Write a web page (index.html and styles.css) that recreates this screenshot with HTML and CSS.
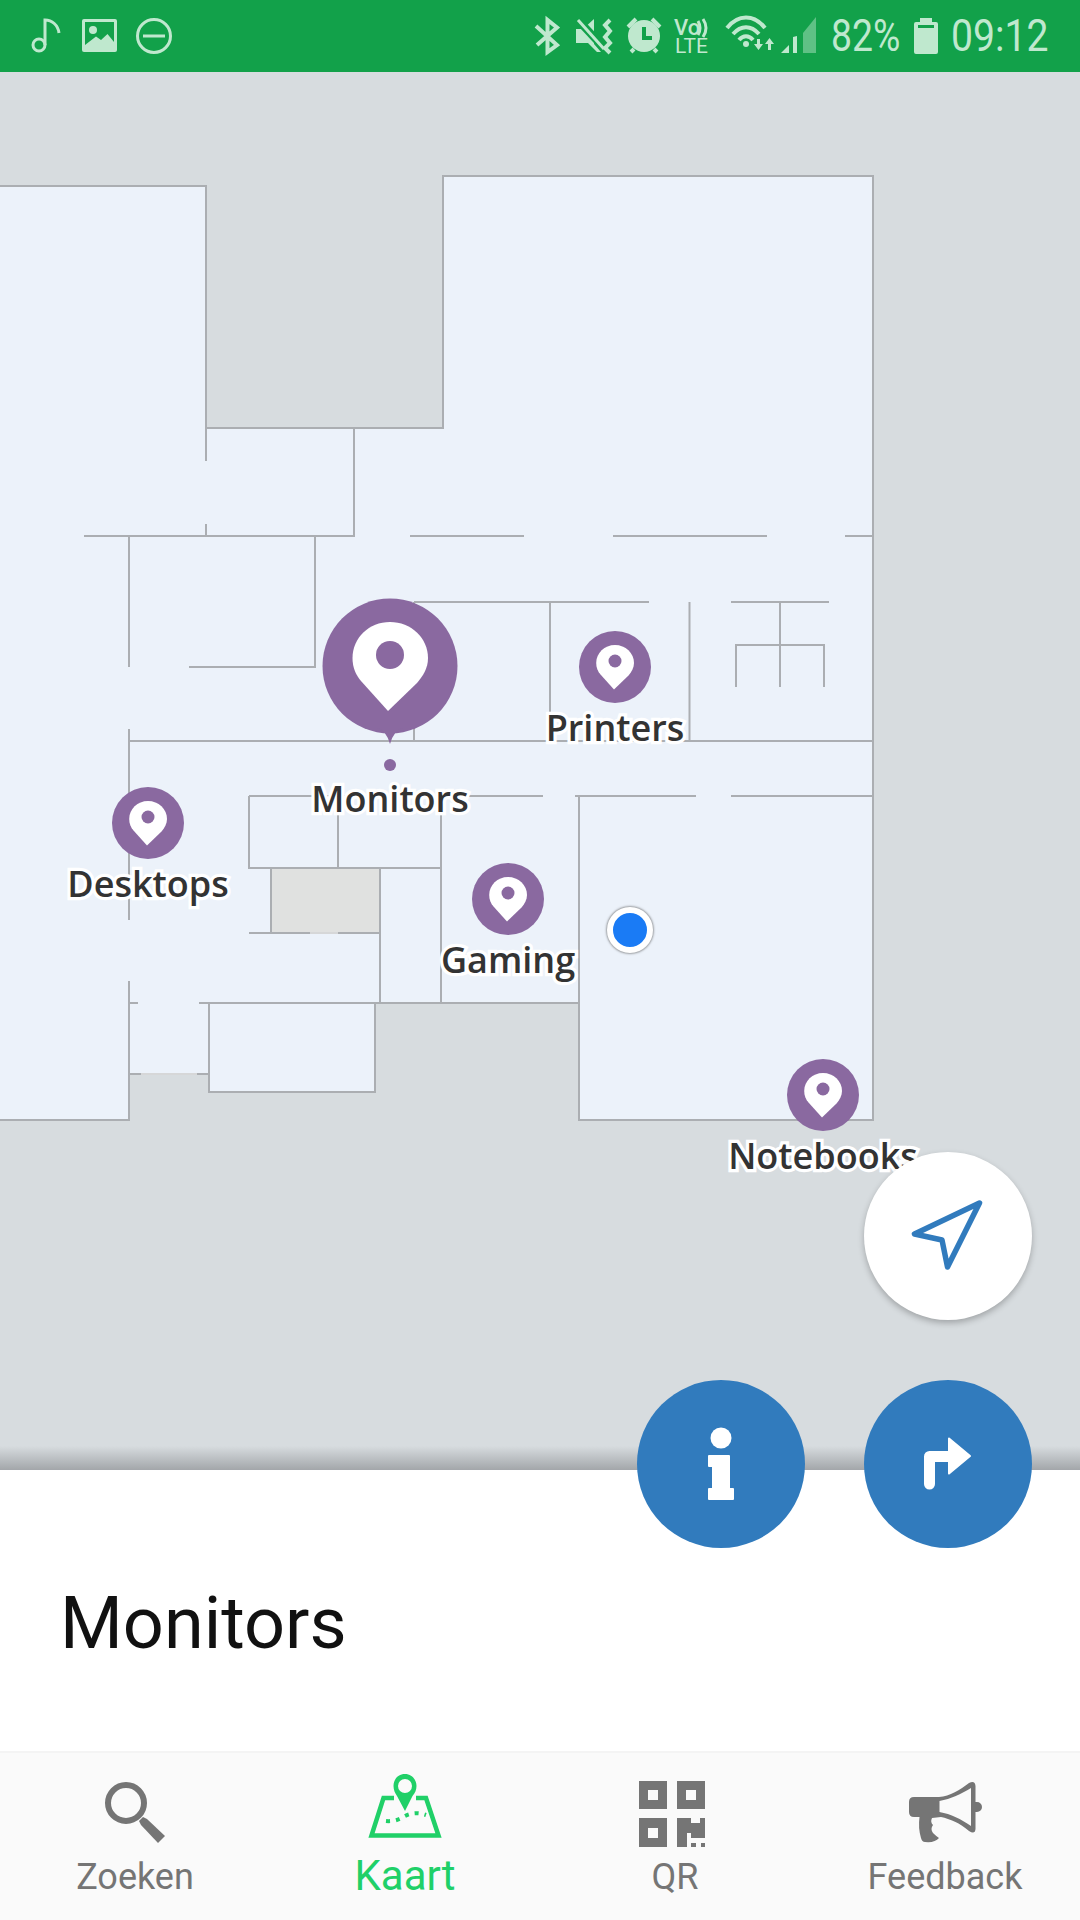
FILE: index.html
```html
<!DOCTYPE html>
<html lang="nl">
<head>
<meta charset="utf-8">
<title>Kaart</title>
<link rel="stylesheet" href="styles.css">
</head>
<body>
<div class="app">
  <header class="status">
    <svg class="status-left" viewBox="20 10 160 52">
      <circle class="st-line" cx="39" cy="45" r="6"/>
      <path class="st-line" d="M45 45V20C52 20 58 25 59 33"/>
      <rect class="st-fill" x="82" y="19" width="35" height="33" rx="2"/>
      <path class="st-hole" d="M85 22H114V42L107.500 34L101 40L96 36.500L85 45Z"/>
      <circle class="st-fill" cx="93" cy="30" r="4"/>
      <circle class="st-line" cx="154" cy="36" r="16.500"/>
      <rect class="st-fill" x="143" y="34.500" width="22" height="3"/>
    </svg>
    <svg class="status-icons" viewBox="530 10 300 52">
      <path class="st-line st-thick" d="M536 26L557 45L547.500 52V20L557 27.500L537 45"/>
      <path class="st-fill" d="M576 29H583L594 19V44L601 52H597L588 43H576Z"/>
      <path class="st-cut" d="M578 20L605 49"/>
      <path class="st-line st-mute" d="M578 20L604 49"/>
      <path class="st-line st-thick" d="M610 20L605 25L610 31L605 37L610 43L605 48L610 53"/>
      <circle class="st-fill" cx="644" cy="36" r="16"/>
      <path class="st-hand" d="M644 27V38H652"/>
      <path class="st-line st-thick" d="M628 27L636 19M660 27L652 19M631 52L634 49M657 52L654 49"/>
      <text class="st-volte" x="674" y="35">Vo<tspan class="st-lte" x="675" y="53">LTE</tspan></text>
      <path class="st-line st-thin" d="M698 21Q702 28 698 35M703 19Q709 28 703 37"/>
      <path class="st-line st-thick" d="M727 28C738 14 754 14 765 28M733 34C741 25 751 25 759 34M739 40C743 35 749 35 753 40"/>
      <circle class="st-fill" cx="746" cy="44" r="3"/>
      <path class="st-fill" d="M754 44H757V39H760V44H763L758.500 50ZM768 44H765L769.500 38L774 44H771V50H768Z"/>
      <path class="st-fill" d="M781 53L789 45V53ZM793 53V37L797 36V53Z"/>
      <path class="st-fill st-dim" d="M803 53V33L816 17V53Z"/>
    </svg>
    <span class="st-text st-pct">82%</span>
    <svg class="status-batt" viewBox="914 18 24 36">
      <path class="st-fill" d="M920 18H932V22H936Q938 22 938 24V52Q938 54 936 54H916Q914 54 914 52V24Q914 22 916 22H920Z"/>
      <rect class="st-hole" x="918" y="25" width="16" height="3"/>
    </svg>
    <span class="st-text st-time">09:12</span>
  </header>

  <main class="map">
    <svg class="plan" viewBox="0 72 1080 1398">
      <path class="floor" d="M0 186H206V428H443V176H873V1120H579V1003H375V1092H209V1074H129V1120H0Z"/>
      <rect class="closet" x="271" y="868" width="109" height="65"/>
      <path class="walls" d="M0 186H206V461M206 524V536M206 428H443V176H873V1120H579V796M354 428V536H84M410 536H524M613 536H767M845 536H873"/>
      <path class="walls" d="M129 536V667M315 536V667H189M414 602H649M550 602V741M689.500 602V741M731 602H829M780 602V687M736 687V645H824V687"/>
      <path class="walls" d="M129 729V920M129 741H873M414 602V741M249 796H543M575 796H696M731 796H873M249 796V868H441M338 796V868M441 796V1003"/>
      <path class="walls" d="M271 868V933M249 933H310M338 933H380M380 868V1003M129 981V1120H0M129 1003H138M199 1003H579M209 1003V1092H375V1003M129 1074H141M197 1074H209"/>
      <path class="door" d="M141 1074H197M310 933H338"/>
    </svg>

    <div class="pin pin-printers">
      <svg class="pin-icon" viewBox="-36 -36 72 72"><use href="#marker-small"/></svg>
      <span class="pin-label">Printers</span>
    </div>
    <div class="pin pin-desktops">
      <svg class="pin-icon" viewBox="-36 -36 72 72"><use href="#marker-small"/></svg>
      <span class="pin-label">Desktops</span>
    </div>
    <div class="pin pin-gaming">
      <svg class="pin-icon" viewBox="-36 -36 72 72"><use href="#marker-small"/></svg>
      <span class="pin-label">Gaming</span>
    </div>
    <div class="pin pin-notebooks">
      <svg class="pin-icon" viewBox="-36 -36 72 72"><use href="#marker-small"/></svg>
      <span class="pin-label">Notebooks</span>
    </div>
    <div class="pin pin-monitors">
      <svg class="pin-big" viewBox="-68 -68 136 173">
        <circle class="mk-bg" r="67.500"/>
        <path class="mk-bg" d="M-13 62Q-4 64 0 78Q4 64 13 62Z"/>
        <path class="mk-white" d="M0 -44C-21 -44 -37.500 -28 -37.500 -8C-37.500 2 -34 9 -29 15L-2 45L27 17C33 10 38 2 38 -8C38 -28 21 -44 0 -44Z"/>
        <circle class="mk-bg" cy="-11" r="14"/>
        <circle class="mk-bg" cy="99" r="6"/>
      </svg>
      <span class="pin-label pin-label-big">Monitors</span>
    </div>
    <div class="me"></div>
  </main>

  <section class="sheet">
    <h1 class="sheet-title">Monitors</h1>
  </section>

  <nav class="tabs">
    <div class="tab">
      <svg class="tab-icon" viewBox="85 1772 100 76">
        <circle class="ic-stroke" cx="126" cy="1803" r="18"/>
        <path class="ic-fill" d="M139 1821L143 1817L147 1819L165 1836L158 1843L141 1825Z"/>
      </svg>
      <span class="tab-label">Zoeken</span>
    </div>
    <div class="tab tab-active">
      <svg class="tab-icon" viewBox="355 1772 100 76">
        <path class="ic-green-line" d="M394 1798H383.500L371.500 1835.500H438.500L426 1798H416"/>
        <path class="ic-green-dots" d="M386 1821Q396 1822 405 1816Q415 1811 426 1815"/>
        <path class="ic-green-fill" fill-rule="evenodd" d="M405 1774C397.500 1774 393.500 1780 393.500 1786C393.500 1790 395 1793 397 1796L405 1811L412.500 1796C415 1793 416.500 1790 416.500 1786C416.500 1780 412 1774 405 1774ZM405 1779A7 7 0 1 1 405 1793A7 7 0 1 1 405 1779Z"/>
      </svg>
      <span class="tab-label">Kaart</span>
    </div>
    <div class="tab">
      <svg class="tab-icon" viewBox="625 1772 100 76">
        <path class="ic-fill" fill-rule="evenodd" d="M639 1781H667V1809H639ZM648 1790V1800H658V1790Z"/>
        <path class="ic-fill" fill-rule="evenodd" d="M677 1781H705V1809H677ZM686 1790V1800H696V1790Z"/>
        <path class="ic-fill" fill-rule="evenodd" d="M639 1818H667V1847H639ZM648 1828V1838H658V1828Z"/>
        <path class="ic-fill" d="M677 1818H691V1823H700V1818H705V1838H691V1833H687V1847H677ZM691 1843H696V1847H691ZM701 1843H705V1847H701Z"/>
      </svg>
      <span class="tab-label">QR</span>
    </div>
    <div class="tab">
      <svg class="tab-icon" viewBox="895 1772 100 76">
        <path class="ic-fill" fill-rule="evenodd" d="M914 1797H939C950 1796 960 1790 969 1783Q975 1780 975.500 1786V1802H977A5 5 0 0 1 977 1812H975.500V1829Q975 1835 969 1831C960 1823 950 1819 941 1817L932 1818Q930 1822 933 1825Q930 1829 933 1833Q936 1836 939 1838Q935 1843 925 1842Q922 1842 921 1838Q918 1828 919.500 1817H914Q909 1817 909 1812V1802Q909 1797 914 1797ZM939.500 1801V1812C951 1814 961 1819 971 1826V1788C961 1794 951 1799 939.500 1801Z"/>
      </svg>
      <span class="tab-label">Feedback</span>
    </div>
  </nav>

  <button class="fab fab-locate" aria-label="Mijn locatie">
    <svg class="fab-icon" viewBox="864 1152 168 168">
      <path class="locate-line" d="M979.500 1203L914.500 1234L942 1240L947.500 1267Z"/>
    </svg>
  </button>
  <button class="fab fab-info" aria-label="Info">
    <svg class="fab-icon" viewBox="637 1380 168 168">
      <circle class="fab-white" cx="721" cy="1438" r="10.500"/>
      <path class="fab-soft" d="M709 1456H729V1489H733V1499H709V1489H713V1466H709Z"/>
    </svg>
  </button>
  <button class="fab fab-route" aria-label="Route">
    <svg class="fab-icon" viewBox="864 1380 168 168">
      <path class="route-line" d="M929.500 1484V1456.500H950"/>
      <path class="fab-soft" d="M949 1438.500L970 1456L949 1473.500Z"/>
    </svg>
  </button>
</div>

<svg class="defs" aria-hidden="true">
  <symbol id="marker-small" class="marker-symbol">
    <circle class="mk-bg" r="36"/>
    <path class="mk-white" d="M0 -22C-10.500 -22 -18.800 -14 -18.800 -4C-18.800 1 -17 4.500 -14.500 7.500L-1 22.500L13.500 8.500C16.500 5 19 1 19 -4C19 -14 10.500 -22 0 -22Z"/>
    <circle class="mk-bg" cy="-6" r="6.500"/>
  </symbol>
</svg>
</body>
</html>
```

FILE: styles.css
```css
* { box-sizing: border-box; }

html, body {
  margin: 0;
  padding: 0;
  width: 1080px;
  height: 1920px;
  overflow: hidden;
}

.app {
  position: relative;
  width: 1080px;
  height: 1920px;
  display: flex;
  flex-direction: column;
  font-family: Roboto, "Liberation Sans", sans-serif;
  background: #ffffff;
}

.defs { width: 0; height: 0; position: absolute; }
.marker-symbol { overflow: visible; }

/* status bar */
.status {
  height: 72px;
  flex: none;
  background: #12a14a;
  display: flex;
  align-items: flex-start;
  padding-top: 10px;
  padding-left: 20px;
}
.status-left { width: 160px; height: 52px; flex: none; }
.status-icons { width: 300px; height: 52px; flex: none; margin-left: 350px; }
.status-batt { width: 24px; height: 36px; flex: none; margin-left: 13px; margin-top: 8px; }

.st-fill { fill: #bfe8ce; }
.st-dim { opacity: 0.45; }
.st-hole { fill: #12a14a; }
.st-cut { fill: none; stroke: #12a14a; stroke-width: 8; }
.st-mute { stroke-width: 4; }
.st-hand { fill: none; stroke: #12a14a; stroke-width: 4; }
.st-line { fill: none; stroke: #bfe8ce; stroke-width: 3; }
.st-thick { stroke-width: 4; }
.st-thin { stroke-width: 3; }
.st-volte { fill: #bfe8ce; font: 500 22px Roboto, sans-serif; }
.st-lte { font-size: 21px; font-weight: 400; }

.st-text {
  display: block;
  flex: none;
  color: #bfe8ce;
  font-size: 45px;
  line-height: 52px;
  font-weight: 400;
  transform-origin: left center;
  white-space: nowrap;
}
.st-pct { width: 70px; margin-left: 1px; transform: scaleX(0.83); }
.st-time { width: 97px; margin-left: 13px; transform: scaleX(0.87); }

/* map */
.map {
  position: relative;
  flex: 1;
  background: #d7dcdf;
  overflow: hidden;
}
.map::after {
  content: "";
  position: absolute;
  left: 0;
  right: 0;
  bottom: 0;
  height: 24px;
  background: linear-gradient(to bottom, rgba(120, 122, 126, 0), rgba(120, 122, 126, 0.55));
}
.plan { position: absolute; inset: 0; width: 100%; height: 100%; display: block; }
.floor { fill: #ecf2fa; }
.closet { fill: #e0e1e0; }
.walls { fill: none; stroke: #abaeb2; stroke-width: 2; }
.door { fill: none; stroke: #d6d7d8; stroke-width: 2; }

/* pins on the map */
.pin {
  position: absolute;
  display: flex;
  flex-direction: column;
  align-items: center;
  width: 240px;
}
.pin-icon { width: 72px; height: 72px; display: block; overflow: visible; }
.pin-big { width: 136px; height: 173px; display: block; }
.mk-bg { fill: #8a69a0; }
.mk-white { fill: #ffffff; }
.pin-label {
  margin-top: 5px;
  font-family: "Open Sans", "Noto Sans", sans-serif;
  font-weight: 600;
  font-size: 36px;
  line-height: 40px;
  color: #333333;
  -webkit-text-stroke: 6.500px #ffffff;
  paint-order: stroke fill;
  white-space: nowrap;
}
.pin-label-big { margin-top: 8px; }
.pin-printers { left: 495px; top: 559px; }
.pin-desktops { left: 28px; top: 715px; }
.pin-gaming { left: 388px; top: 791px; }
.pin-notebooks { left: 703px; top: 987px; }
.pin-monitors { left: 270px; top: 526px; }

.me {
  position: absolute;
  left: 607px;
  top: 835px;
  width: 46px;
  height: 46px;
  border-radius: 50%;
  background: #1a7bf5;
  border: 6px solid #ffffff;
  box-shadow: 0 0 2px 1px rgba(90, 90, 90, 0.55);
}

/* bottom sheet */
.sheet {
  flex: none;
  height: 281px;
  padding: 114px 0 0 60px;
  background: #ffffff;
}
.sheet-title {
  margin: 0;
  font-weight: 400;
  font-size: 72px;
  line-height: 80px;
  color: #111111;
}

/* tabs */
.tabs {
  flex: none;
  height: 169px;
  display: grid;
  grid-template-columns: repeat(4, 1fr);
  background: #fafafa;
  border-top: 2px solid #f4f4f4;
}
.tab {
  display: flex;
  flex-direction: column;
  align-items: center;
  padding-top: 19px;
  color: #757575;
}
.tab-icon { width: 100px; height: 76px; display: block; flex: none; }
.tab-label { font-size: 36px; line-height: 44px; margin-top: 7px; }
.tab-active { color: #20d068; }
.tab-active .tab-label { font-size: 42px; margin-top: 6px; }

.ic-stroke { fill: none; stroke: #757575; stroke-width: 6; }
.ic-fill { fill: #757575; }
.ic-green-line { fill: none; stroke: #20d068; stroke-width: 4.500; }
.ic-green-dots { fill: none; stroke: #20d068; stroke-width: 4; stroke-dasharray: 4 6; }
.ic-green-fill { fill: #20d068; }

/* floating buttons */
.fab {
  position: absolute;
  width: 168px;
  height: 168px;
  padding: 0;
  border: 0;
  border-radius: 50%;
  background: #317bbd;
}
.fab-icon { width: 168px; height: 168px; display: block; }
.fab-locate { left: 864px; top: 1152px; background: #ffffff; box-shadow: 0 3px 6px rgba(0, 0, 0, 0.25); }
.fab-info { left: 637px; top: 1380px; }
.fab-route { left: 864px; top: 1380px; }
.fab-white { fill: #ffffff; }
.fab-soft { fill: #ffffff; stroke: #ffffff; stroke-width: 2; stroke-linejoin: round; }
.locate-line { fill: none; stroke: #317bbd; stroke-width: 5.500; stroke-linejoin: round; }
.route-line { fill: none; stroke: #ffffff; stroke-width: 11; stroke-linecap: round; stroke-linejoin: round; }
```
